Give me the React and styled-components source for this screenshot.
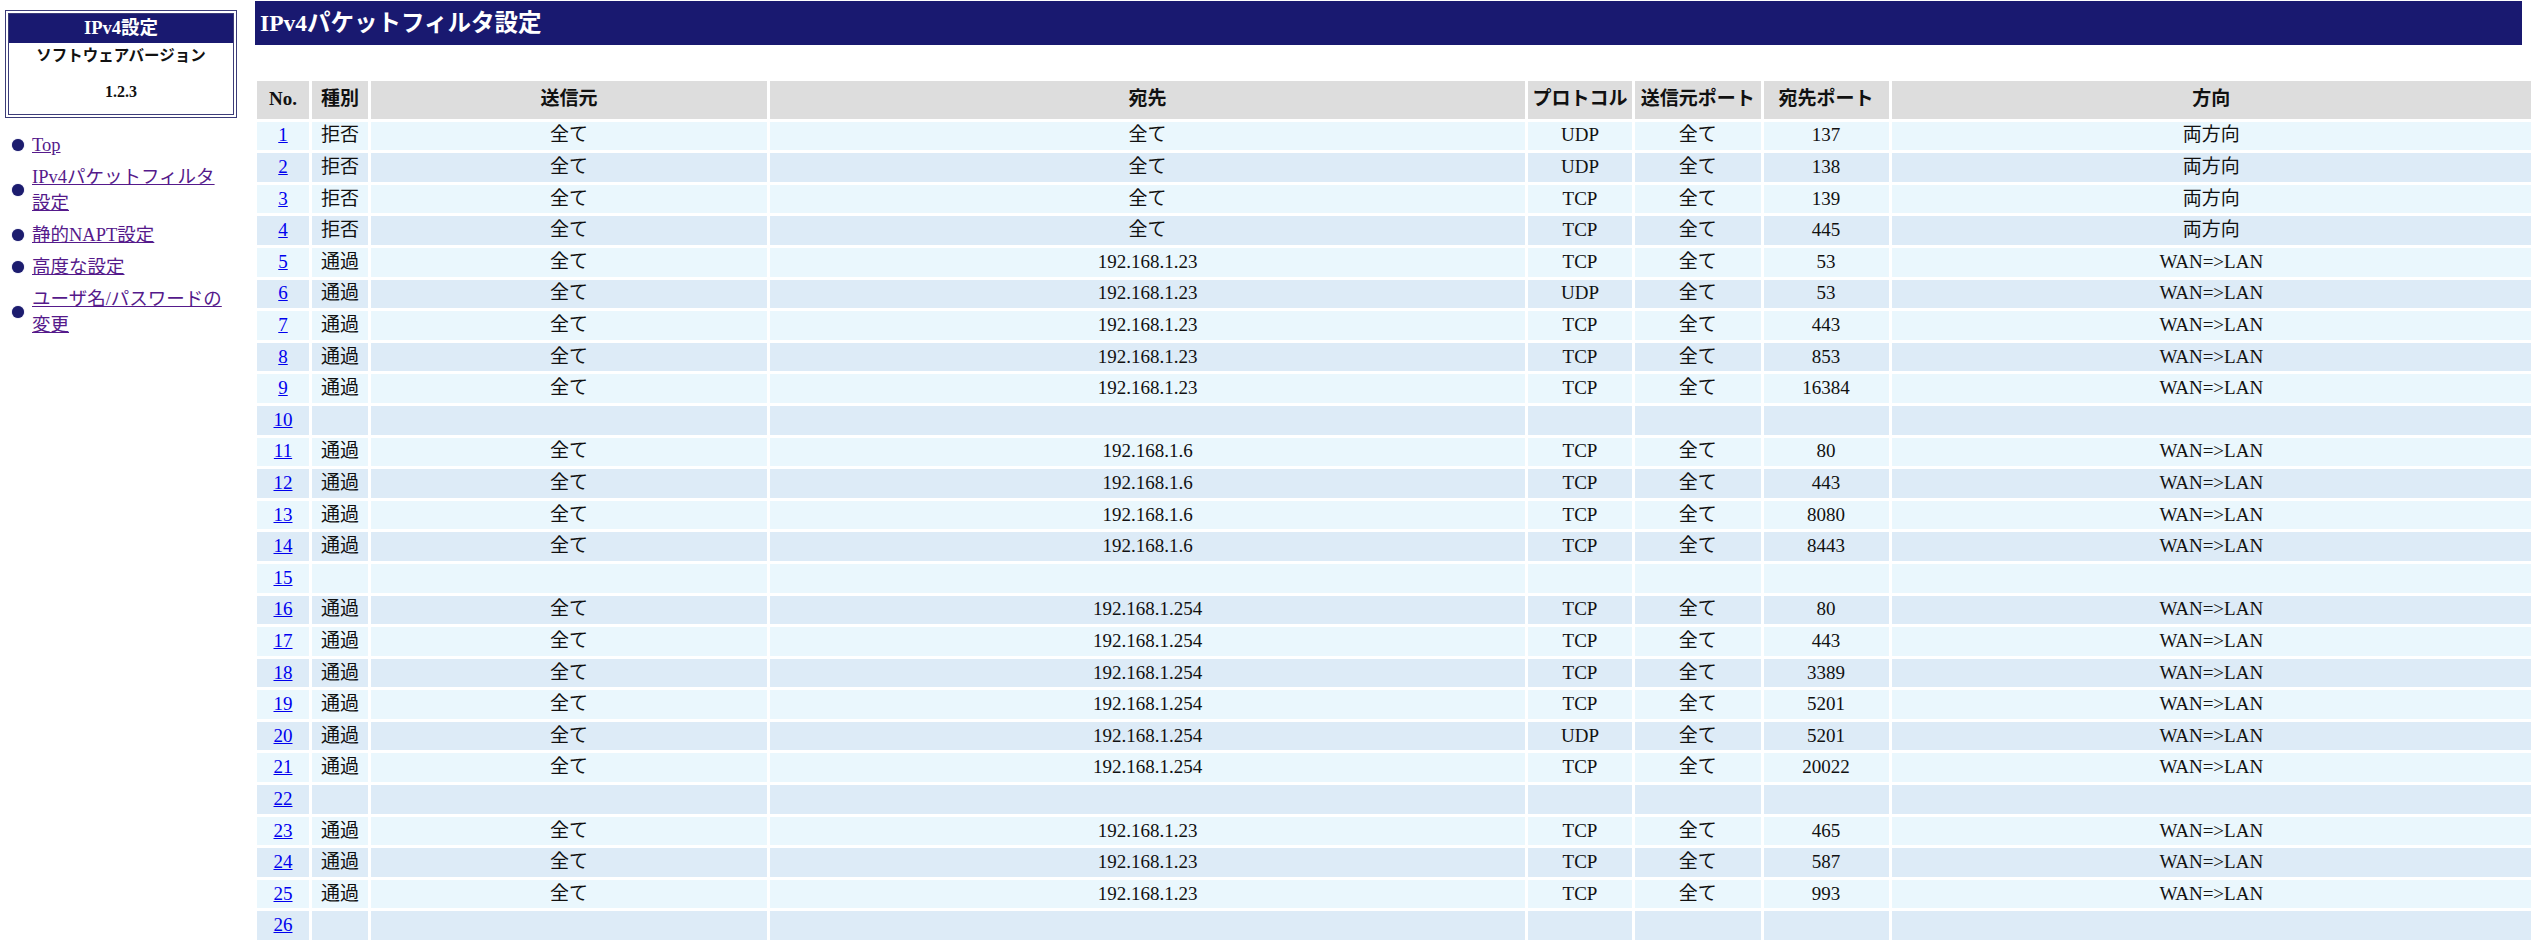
import React from "react";
import styled, { createGlobalStyle } from "styled-components";

const Global = createGlobalStyle`
  html, body { margin: 0; padding: 0; background: #ffffff; }
  body {
    font-family: "Liberation Serif", "Noto Sans CJK JP", serif;
    color: #111111;
  }
`;

const FONT = `"Liberation Serif", "Noto Sans CJK JP", serif`;

const Page = styled.div`
  display: flex;
  align-items: flex-start;
  width: 2534px;
`;

const Sidebar = styled.aside`
  flex: 0 0 232px;
  margin-left: 5px;
  margin-right: 17px;
  padding-top: 10px;
`;

const InfoBox = styled.div`
  border: 4px double #3c3c78;
  background: #ffffff;
  padding-bottom: 11px;
  text-align: center;
`;

const InfoTitle = styled.div`
  background: #191970;
  color: #ffffff;
  font: bold 18.5px/29px ${FONT};
`;

const InfoLabel = styled.div`
  font: bold 15.5px/24px ${FONT};
  color: #111;
  margin-top: 1px;
`;

const InfoVersion = styled.div`
  font: bold 16px/22px ${FONT};
  color: #111;
  margin-top: 13px;
`;

const Nav = styled.ul`
  list-style: none;
  margin: 14px 0 0 0;
  padding: 0 0 0 7px;
  display: flex;
  flex-direction: column;
  gap: 6px;
`;

const NavItem = styled.li`
  display: flex;
  align-items: center;
  gap: 8px;
`;

const Bullet = styled.span`
  flex: 0 0 12px;
  width: 12px;
  height: 12px;
  border-radius: 50%;
  background: #1c1c6e;
  box-shadow: 0 0 1px #5050a0;
`;

const NavLink = styled.a`
  font: 18.5px/26px ${FONT};
  color: #551a8b;
  text-decoration: underline;
  flex: 1;
`;

const Main = styled.main`
  flex: 1;
  padding-top: 1px;
  min-width: 0;
`;

const TitleBar = styled.h1`
  margin: 0 12px 0 1px;
  background: #191970;
  color: #ffffff;
  font: bold 23.5px/44px ${FONT};
  padding: 0 5px;
`;

const Table = styled.table`
  margin-top: 33px;
  width: 100%;
  table-layout: fixed;
  border-collapse: separate;
  border-spacing: 3px;
  font-family: ${FONT};
`;

const HeadCell = styled.th`
  background: #dddddd;
  height: 37.6px;
  padding: 0 2px;
  font: bold 19px/1.2 ${FONT};
  color: #111;
  text-align: center;
  vertical-align: middle;
  white-space: nowrap;
`;

const Row = styled.tr`
  background: ${(p) => (p.$alt ? "#ddebf7" : "#eaf7fd")};
`;

const Cell = styled.td`
  height: 28.6px;
  padding: 0 2px;
  font: 19px/1.2 ${FONT};
  color: #111;
  text-align: center;
  vertical-align: middle;
  white-space: nowrap;
`;

const NumLink = styled.a`
  color: #0000ee;
  text-decoration: underline;
`;

const cols = [52, 56, 396, 755, 104, 125.5, 125, null];
const heads = ["No.", "種別", "送信元", "宛先", "プロトコル", "送信元ポート", "宛先ポート", "方向"];

const A = "全て";
const W = "WAN=>LAN";
const rows = [
  ["拒否", A, A, "UDP", A, "137", "両方向"],
  ["拒否", A, A, "UDP", A, "138", "両方向"],
  ["拒否", A, A, "TCP", A, "139", "両方向"],
  ["拒否", A, A, "TCP", A, "445", "両方向"],
  ["通過", A, "192.168.1.23", "TCP", A, "53", W],
  ["通過", A, "192.168.1.23", "UDP", A, "53", W],
  ["通過", A, "192.168.1.23", "TCP", A, "443", W],
  ["通過", A, "192.168.1.23", "TCP", A, "853", W],
  ["通過", A, "192.168.1.23", "TCP", A, "16384", W],
  null,
  ["通過", A, "192.168.1.6", "TCP", A, "80", W],
  ["通過", A, "192.168.1.6", "TCP", A, "443", W],
  ["通過", A, "192.168.1.6", "TCP", A, "8080", W],
  ["通過", A, "192.168.1.6", "TCP", A, "8443", W],
  null,
  ["通過", A, "192.168.1.254", "TCP", A, "80", W],
  ["通過", A, "192.168.1.254", "TCP", A, "443", W],
  ["通過", A, "192.168.1.254", "TCP", A, "3389", W],
  ["通過", A, "192.168.1.254", "TCP", A, "5201", W],
  ["通過", A, "192.168.1.254", "UDP", A, "5201", W],
  ["通過", A, "192.168.1.254", "TCP", A, "20022", W],
  null,
  ["通過", A, "192.168.1.23", "TCP", A, "465", W],
  ["通過", A, "192.168.1.23", "TCP", A, "587", W],
  ["通過", A, "192.168.1.23", "TCP", A, "993", W],
  null,
];

const navItems = [
  "Top",
  "IPv4パケットフィルタ 設定",
  "静的NAPT設定",
  "高度な設定",
  "ユーザ名/パスワードの変更",
];

export default function App() {
  return (
    <>
      <Global />
      <Page>
        <Sidebar>
          <InfoBox>
            <InfoTitle>IPv4設定</InfoTitle>
            <InfoLabel>ソフトウェアバージョン</InfoLabel>
            <InfoVersion>1.2.3</InfoVersion>
          </InfoBox>
          <Nav>
            {navItems.map((t) => (
              <NavItem key={t}>
                <Bullet />
                <NavLink href="#">{t}</NavLink>
              </NavItem>
            ))}
          </Nav>
        </Sidebar>
        <Main>
          <TitleBar>IPv4パケットフィルタ設定</TitleBar>
          <Table>
            <colgroup>
              {cols.map((w, i) => (
                <col key={i} style={w ? { width: `${w}px` } : undefined} />
              ))}
            </colgroup>
            <thead>
              <tr>
                {heads.map((h) => (
                  <HeadCell key={h}>{h}</HeadCell>
                ))}
              </tr>
            </thead>
            <tbody>
              {rows.map((r, i) => (
                <Row key={i} $alt={i % 2 === 1}>
                  <Cell>
                    <NumLink href="#">{i + 1}</NumLink>
                  </Cell>
                  {(r || ["", "", "", "", "", "", ""]).map((v, j) => (
                    <Cell key={j}>{v}</Cell>
                  ))}
                </Row>
              ))}
            </tbody>
          </Table>
        </Main>
      </Page>
    </>
  );
}
